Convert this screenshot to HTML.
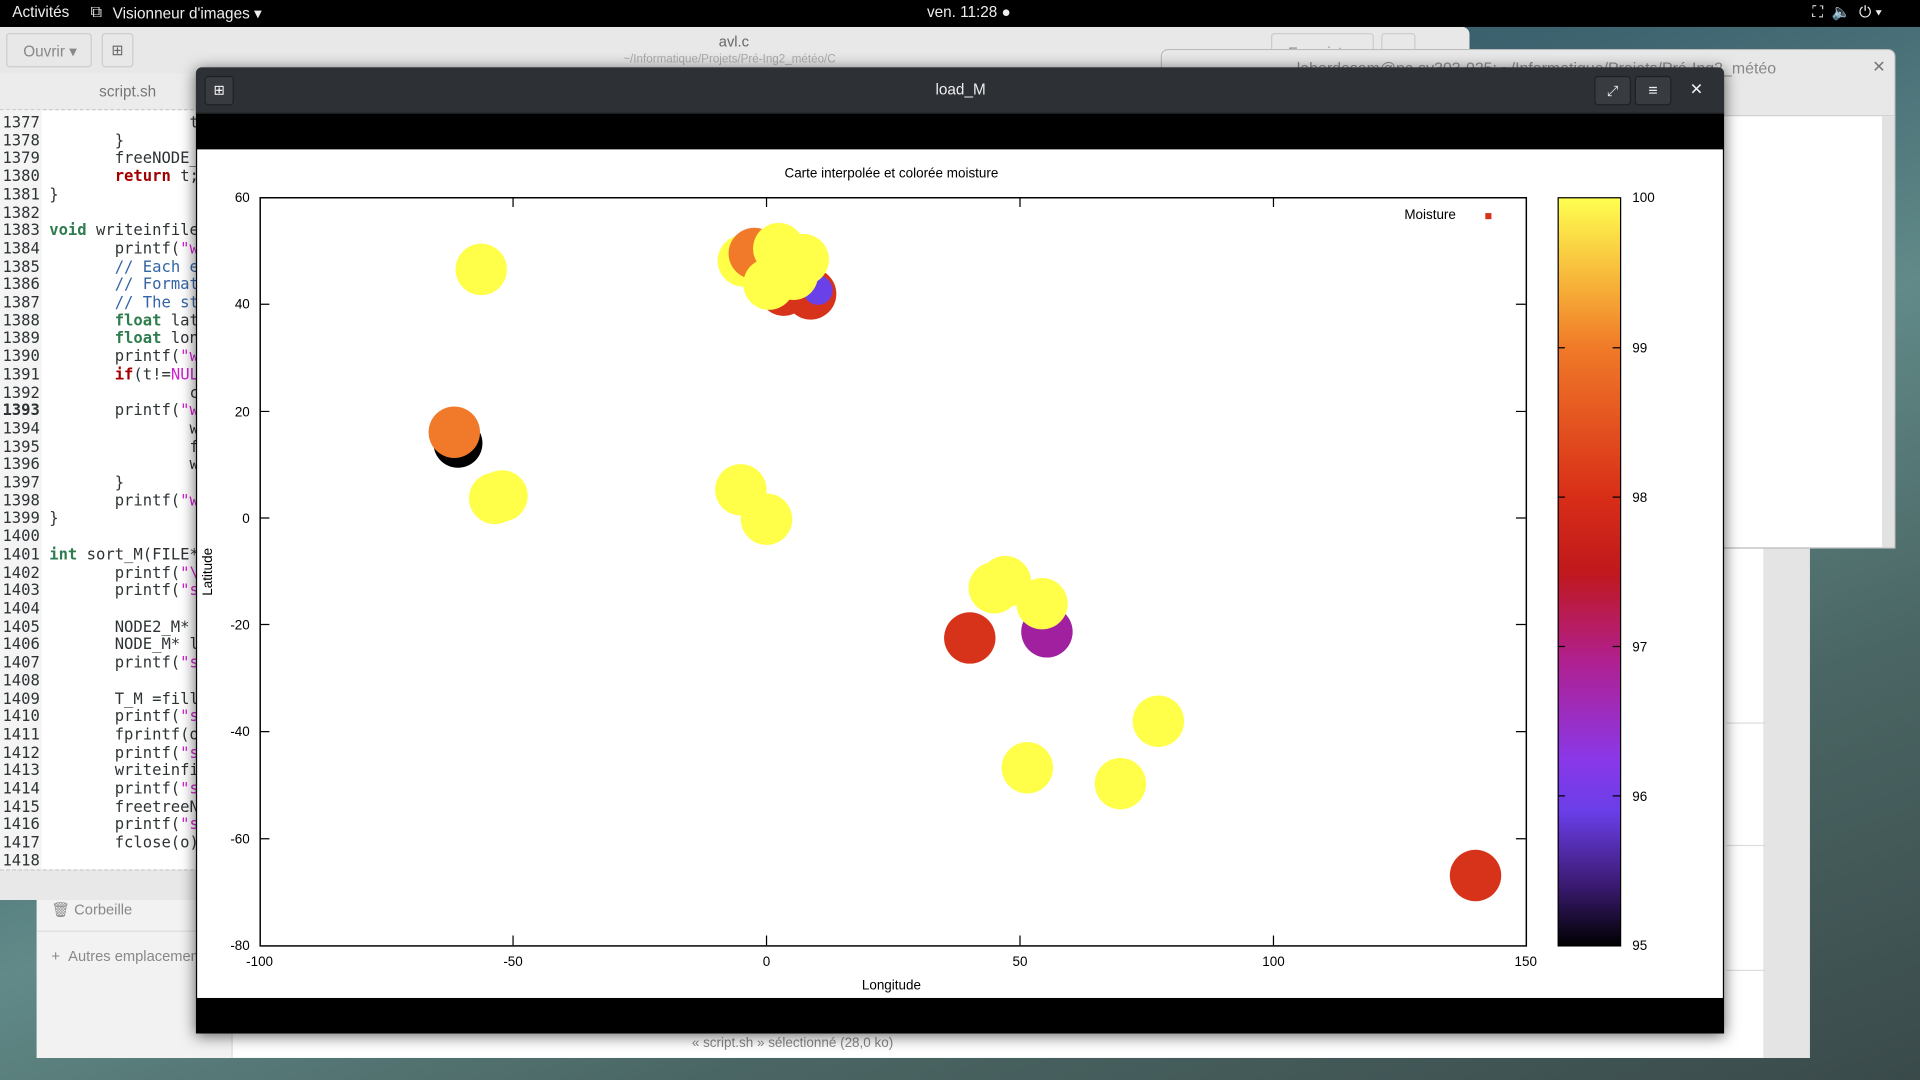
<!DOCTYPE html>
<html><head><meta charset="utf-8"><style>
*{margin:0;padding:0;box-sizing:border-box}
html,body{width:1920px;height:1080px;overflow:hidden;background:#000}
#w{position:absolute;left:0;top:0;width:1568px;height:882px;transform:scale(1.22449);transform-origin:0 0;font-family:"Liberation Sans",sans-serif;overflow:hidden;
background:linear-gradient(160deg,#1f3d55 0%,#3e6470 35%,#618a88 55%,#4a6664 75%,#3a4a4a 100%)}
.abs{position:absolute}
.code{font-family:"DejaVu Sans Mono","Liberation Mono",monospace;font-size:12.7px;line-height:14.7px;white-space:pre;color:#2e3436}
.k{color:#2e7d4f;font-weight:bold}.r{color:#a40000;font-weight:bold}.c{color:#3465a4}.s{color:#d020d0}
</style></head><body><div id="w">
<!-- top bar -->
<div class="abs" style="left:0;top:0;width:1568px;height:22px;background:#000;color:#eee;font-size:12.5px">
<span class="abs" style="left:10px;top:3px">Activités</span>
<span class="abs" style="left:74px;top:2px;font-size:13px">⧉</span>
<span class="abs" style="left:92px;top:3px">Visionneur d'images ▾</span>
<span class="abs" style="left:757px;top:3px">ven. 11:28 ●</span>
<span class="abs" style="left:1480px;top:3px">⛶ &nbsp;🔈 &nbsp;⏻ ▾</span>
</div>
<!-- file manager behind -->
<div class="abs" style="left:30px;top:440px;width:1448px;height:424px;background:#fff">
<div class="abs" style="left:0;top:0;width:160px;height:424px;background:#f2f2f2;border-right:1px solid #ddd"></div>
<div class="abs" style="left:1410px;top:0;width:38px;height:424px;background:#e4e4e4"></div>
<div class="abs" style="left:12px;top:296px;color:#888;font-size:12px">🗑 Corbeille</div>
<div class="abs" style="left:0;top:320px;width:160px;border-top:1px solid #ddd"></div>
<div class="abs" style="left:12px;top:334px;color:#888;font-size:12px">+ &nbsp;Autres emplacements</div>
<div class="abs" style="left:1380px;top:150px;width:32px;border-top:1px solid #ddd"></div>
<div class="abs" style="left:1380px;top:250px;width:32px;border-top:1px solid #ddd"></div>
<div class="abs" style="left:1380px;top:352px;width:32px;border-top:1px solid #ddd"></div>
<div class="abs" style="left:535px;top:406px;color:#888;font-size:11px">« script.sh » sélectionné (28,0 ko)</div>
</div>
<!-- gedit -->
<div class="abs" style="left:0;top:22px;width:1200px;height:713px;background:#fff;border-radius:0 6px 0 0">
<div class="abs" style="left:0;top:0;width:1200px;height:38px;background:#e8e8e8;border-radius:0 6px 0 0"></div>
<div class="abs" style="left:5px;top:5px;width:70px;height:28px;border:1px solid #ccc;border-radius:3px;color:#888;font-size:12.5px;padding:6px 0 0 13px">Ouvrir ▾</div>
<div class="abs" style="left:83px;top:5px;width:26px;height:28px;border:1px solid #ccc;border-radius:3px;color:#666;font-size:12px;text-align:center;padding-top:6px">⊞</div>
<div class="abs" style="left:587px;top:5px;color:#666;font-size:12px">avl.c</div>
<div class="abs" style="left:509px;top:21px;color:#aaa;font-size:9.5px">~/Informatique/Projets/Pré-Ing2_météo/C</div>
<div class="abs" style="left:1038px;top:5px;width:84px;height:28px;border:1px solid #ccc;border-radius:3px;color:#888;font-size:12px;padding:8px 0 0 13px">Enregistrer</div>
<div class="abs" style="left:1128px;top:5px;width:28px;height:28px;border:1px solid #ccc;border-radius:3px"></div>
<div class="abs" style="left:0;top:38px;width:1200px;height:30px;background:#ececec;border-bottom:1px dashed #ccc"></div>
<div class="abs" style="left:81px;top:46px;color:#777;font-size:12.5px">script.sh</div>
<div class="abs" style="left:0;top:68px;width:34px;height:620px;background:#f4f4f4"></div>
<div class="abs code" style="left:2px;top:71px">1377                t
1378        }
1379        freeNODE_
1380        <span class="r">return</span> t;
1381 }
1382
1383 <span class="k">void</span> writeinfileN
1384        printf(<span class="s">"w</span>
1385        <span class="c">// Each e</span>
1386        <span class="c">// Format</span>
1387        <span class="c">// The st</span>
1388        <span class="k">float</span> lat
1389        <span class="k">float</span> lon
1390        printf(<span class="s">"w</span>
1391        <span class="r">if</span>(t!=<span class="s">NUL</span>
1392                c
<b>1393</b>        printf(<span class="s">"w</span>
1394                w
1395                f
1396                w
1397        }
1398        printf(<span class="s">"w</span>
1399 }
1400
1401 <span class="k">int</span> sort_M(FILE*
1402        printf(<span class="s">"\</span>
1403        printf(<span class="s">"s</span>
1404
1405        NODE2_M*
1406        NODE_M* l
1407        printf(<span class="s">"s</span>
1408
1409        T_M =fill
1410        printf(<span class="s">"s</span>
1411        fprintf(o
1412        printf(<span class="s">"s</span>
1413        writeinfi
1414        printf(<span class="s">"s</span>
1415        freetreeN
1416        printf(<span class="s">"s</span>
1417        fclose(o)
1418</div>
<div class="abs" style="left:0;top:688px;width:1200px;height:25px;background:#e8e8e8;border-top:1px dashed #ccc"></div>
</div>
<!-- terminal (above gedit) -->
<div class="abs" style="left:948px;top:40px;width:600px;height:408px;background:#fff;border:1px solid #bbb;border-radius:6px 6px 0 0">
<div class="abs" style="left:0;top:0;width:598px;height:54px;background:#e8e8e8;border-bottom:1px solid #ccc;border-radius:6px 6px 0 0"></div>
<div class="abs" style="left:110px;top:7px;color:#888;font-size:13px">labordesam@pc-sv303-025: ~/Informatique/Projets/Pré-Ing2_météo</div>
<div class="abs" style="left:580px;top:6px;color:#777;font-size:13px">✕</div>
<div class="abs" style="left:588px;top:54px;width:10px;height:352px;background:#e2e2e2"></div>
</div>
<!-- image viewer -->
<div class="abs" style="left:160px;top:55px;width:1248px;height:789px;background:#000;box-shadow:0 2px 12px rgba(0,0,0,.6);border-radius:5px 5px 0 0;overflow:hidden">
<div class="abs" style="left:0;top:0;width:1248px;height:38px;background:#2d3136;border-bottom:1px solid #1a1c1e"></div>
<div class="abs" style="left:7px;top:7px;width:24px;height:24px;background:#383c41;border:1px solid #1e2124;border-radius:3px;color:#fff;font-size:11px;text-align:center;line-height:22px">⊞</div>
<div class="abs" style="left:604px;top:11px;color:#eee;font-size:12.5px">load_M</div>
<div class="abs" style="left:1142px;top:7px;width:30px;height:24px;background:#383c41;border:1px solid #1e2124;border-radius:3px;color:#eee;font-size:12px;text-align:center;line-height:22px">⤢</div>
<div class="abs" style="left:1175px;top:7px;width:30px;height:24px;background:#383c41;border:1px solid #1e2124;border-radius:3px;color:#eee;font-size:13px;text-align:center;line-height:22px">≡</div>
<div class="abs" style="left:1220px;top:10px;color:#eee;font-size:13px">✕</div>
<div class="abs" style="left:1px;top:67px;width:1246px;height:693px;background:#fff"></div>
</div>
<!-- plot -->
<svg class="abs" style="left:0;top:0" width="1568" height="882" viewBox="0 0 1568 882" font-family="Liberation Sans, sans-serif" font-size="11">
<defs><linearGradient id="cb" x1="0" y1="0" x2="0" y2="1">
<stop offset="0" stop-color="#ffff50"/><stop offset=".2" stop-color="#f07a28"/><stop offset=".4" stop-color="#d82e18"/><stop offset=".5" stop-color="#c0181c"/><stop offset=".62" stop-color="#b02090"/><stop offset=".75" stop-color="#8a38e8"/><stop offset=".82" stop-color="#6a3ee8"/><stop offset=".92" stop-color="#3a1a70"/><stop offset="1" stop-color="#000"/></linearGradient></defs>
<text x="728" y="145" text-anchor="middle">Carte interpolée et colorée moisture</text>
<g>
<circle cx="855" cy="516" r="21" fill="#a020a0"/>
<circle cx="792" cy="521" r="21" fill="#d6331a"/>
<circle cx="374" cy="362" r="20" fill="#000"/>
<circle cx="371" cy="353" r="21" fill="#f07a2a"/>
<circle cx="662" cy="240" r="21" fill="#d6331a"/>
<circle cx="640" cy="238" r="20" fill="#d6331a"/>
<circle cx="668" cy="237" r="12" fill="#6a40e8"/>
<circle cx="607" cy="213" r="21" fill="#ffff4a"/>
<circle cx="616" cy="207" r="21" fill="#f07a2a"/>
<circle cx="628" cy="232" r="21" fill="#ffff4a"/>
<circle cx="648" cy="225" r="20" fill="#ffff4a"/>
<circle cx="636" cy="203" r="21" fill="#ffff4a"/>
<circle cx="656" cy="212" r="21" fill="#ffff4a"/>
<circle cx="393" cy="220" r="21" fill="#ffff4a"/>
<circle cx="404" cy="407" r="21" fill="#ffff4a"/>
<circle cx="410" cy="405" r="21" fill="#ffff4a"/>
<circle cx="605" cy="400" r="21" fill="#ffff4a"/>
<circle cx="626" cy="424" r="21" fill="#ffff4a"/>
<circle cx="812" cy="480" r="21" fill="#ffff4a"/>
<circle cx="821" cy="475" r="21" fill="#ffff4a"/>
<circle cx="851" cy="493" r="21" fill="#ffff4a"/>
<circle cx="946" cy="589" r="21" fill="#ffff4a"/>
<circle cx="839" cy="627" r="21" fill="#ffff4a"/>
<circle cx="915" cy="640" r="21" fill="#ffff4a"/>
<circle cx="1205" cy="715" r="21" fill="#d6331a"/>
</g>
<rect x="212.5" y="161.5" width="1034" height="611" fill="none" stroke="#000" stroke-width="1.2"/>
<g stroke="#000" stroke-width="1">
<path d="M419 772v-8M626 772v-8M833 772v-8M1040 772v-8M419 161v8M626 161v8M833 161v8M1040 161v8"/>
<path d="M212 248.5h8M212 336h8M212 423h8M212 510h8M212 597.5h8M212 685h8M1246 248.5h-8M1246 336h-8M1246 423h-8M1246 510h-8M1246 597.5h-8M1246 685h-8"/>
</g>
<g text-anchor="end">
<text x="204" y="165">60</text><text x="204" y="252">40</text><text x="204" y="340">20</text><text x="204" y="427">0</text><text x="204" y="514">-20</text><text x="204" y="601">-40</text><text x="204" y="689">-60</text><text x="204" y="776">-80</text>
</g>
<g text-anchor="middle">
<text x="212" y="789">-100</text><text x="419" y="789">-50</text><text x="626" y="789">0</text><text x="833" y="789">50</text><text x="1040" y="789">100</text><text x="1246" y="789">150</text>
<text x="728" y="808">Longitude</text>
</g>
<text transform="translate(173 467) rotate(-90)" text-anchor="middle">Latitude</text>
<text x="1189" y="179" text-anchor="end">Moisture</text>
<rect x="1213" y="174" width="5" height="5" fill="#d6331a"/>
<rect x="1272.5" y="161.5" width="51" height="611" fill="url(#cb)" stroke="#000"/>
<g stroke="#000"><path d="M1272 284h6M1272 406h6M1272 528h6M1272 650h6M1323 284h-6M1323 406h-6M1323 528h-6M1323 650h-6"/></g>
<g><text x="1333" y="165">100</text><text x="1333" y="288">99</text><text x="1333" y="410">98</text><text x="1333" y="532">97</text><text x="1333" y="654">96</text><text x="1333" y="776">95</text></g>
</svg>
</div></body></html>
